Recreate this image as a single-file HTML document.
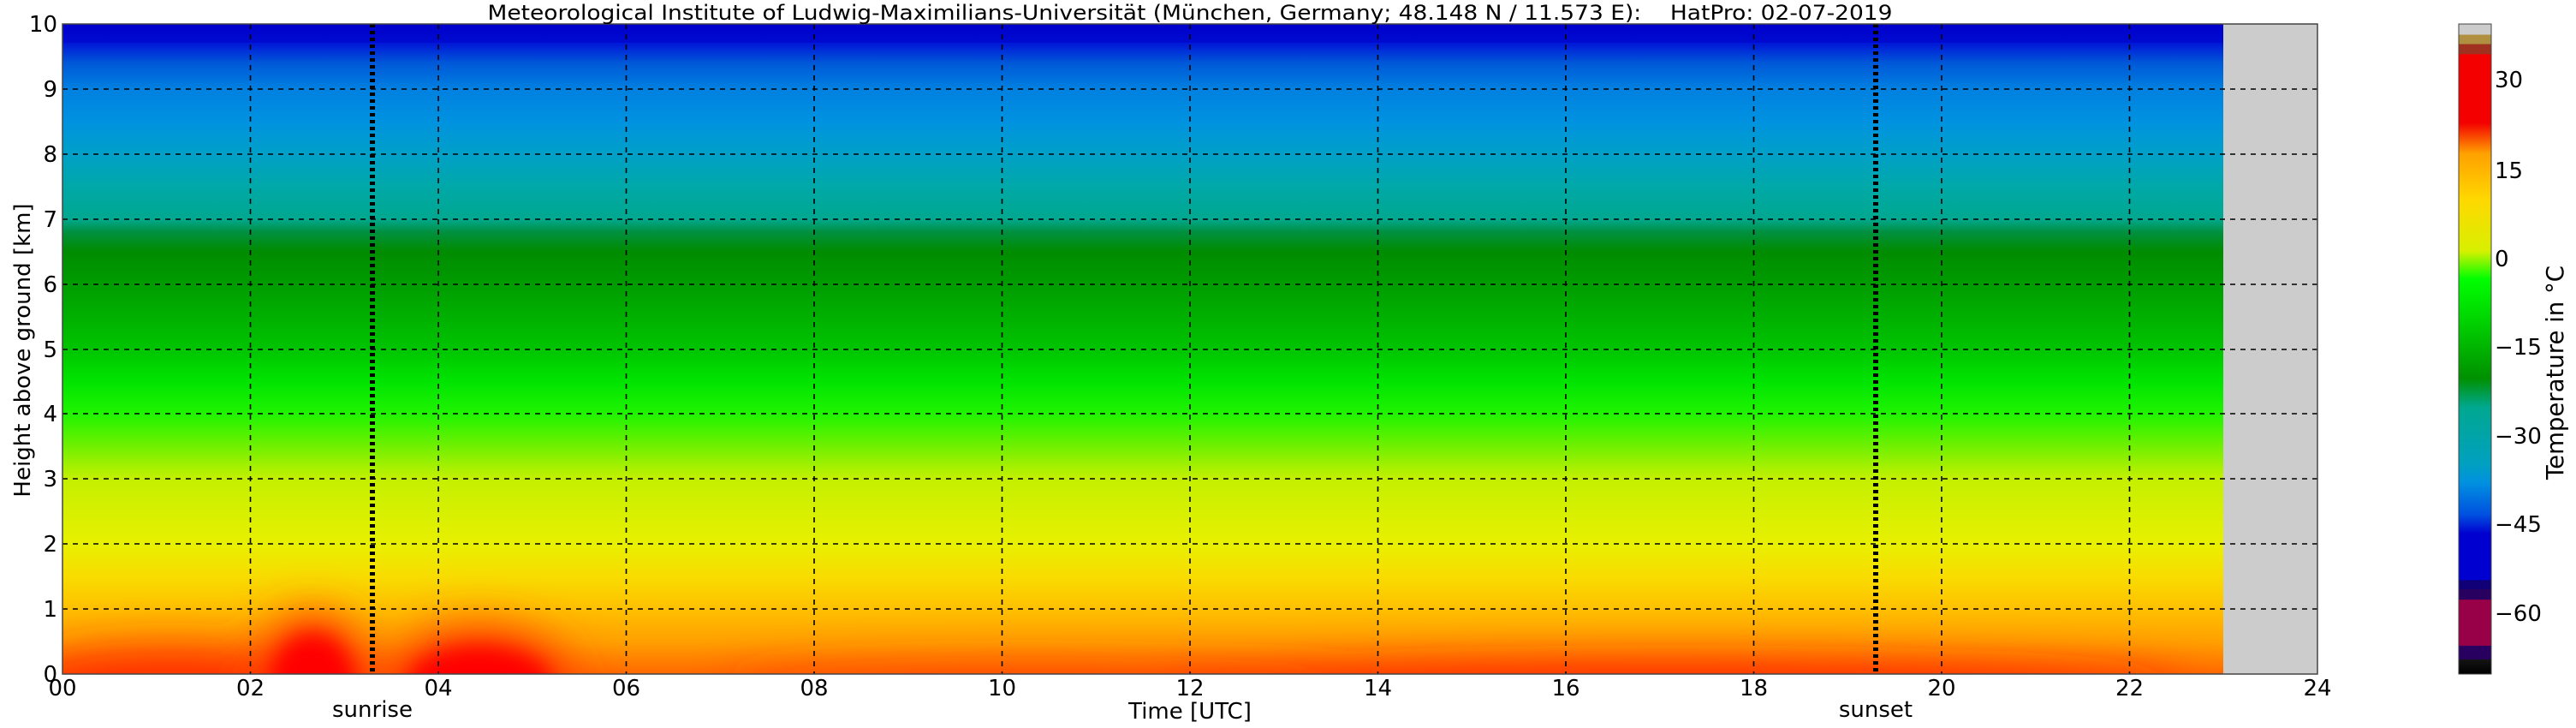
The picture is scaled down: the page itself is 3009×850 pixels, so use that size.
<!DOCTYPE html>
<html><head><meta charset="utf-8"><style>
html,body{margin:0;padding:0;background:#fff;width:3009px;height:850px;overflow:hidden}
svg{display:block;position:absolute;left:0;top:0}
text{font-family:"DejaVu Sans","Liberation Sans",sans-serif;fill:#000}
</style></head><body>
<svg width="3009" height="850" viewBox="0 0 3009 850" xmlns="http://www.w3.org/2000/svg">
<defs>
<linearGradient id="v" x1="0" y1="0" x2="0" y2="1">
<stop offset="0" stop-color="#0000d0"/>
<stop offset="0.03" stop-color="#0018d8"/>
<stop offset="0.06" stop-color="#0058d8"/>
<stop offset="0.10" stop-color="#0080e0"/>
<stop offset="0.15" stop-color="#0092e0"/>
<stop offset="0.20" stop-color="#00a0c8"/>
<stop offset="0.25" stop-color="#00a8a8"/>
<stop offset="0.30" stop-color="#00a890"/>
<stop offset="0.32" stop-color="#009040"/>
<stop offset="0.35" stop-color="#008c00"/>
<stop offset="0.40" stop-color="#009c00"/>
<stop offset="0.50" stop-color="#00c400"/>
<stop offset="0.55" stop-color="#00e400"/>
<stop offset="0.60" stop-color="#20f400"/>
<stop offset="0.65" stop-color="#70f000"/>
<stop offset="0.70" stop-color="#c4f000"/>
<stop offset="0.80" stop-color="#e8f000"/>
<stop offset="0.85" stop-color="#f8dc00"/>
<stop offset="0.90" stop-color="#ffc000"/>
<stop offset="0.95" stop-color="#ffa000"/>
<stop offset="1" stop-color="#ff6800"/>
</linearGradient>
<filter id="b1" x="-50%" y="-50%" width="200%" height="200%"><feGaussianBlur stdDeviation="25"/></filter>
<filter id="b2" x="-50%" y="-50%" width="200%" height="200%"><feGaussianBlur stdDeviation="12"/></filter>
<linearGradient id="cb" x1="0" y1="0" x2="0" y2="1">
<stop offset="0" stop-color="#cccccc"/>
<stop offset="0.0164" stop-color="#cccccc"/>
<stop offset="0.0165" stop-color="#b09040"/>
<stop offset="0.0308" stop-color="#b09040"/>
<stop offset="0.0309" stop-color="#a03020"/>
<stop offset="0.0464" stop-color="#a03020"/>
<stop offset="0.0465" stop-color="#f40000"/>
<stop offset="0.152" stop-color="#f40000"/>
<stop offset="0.199" stop-color="#ffa000"/>
<stop offset="0.270" stop-color="#ffd800"/>
<stop offset="0.349" stop-color="#d8f000"/>
<stop offset="0.392" stop-color="#00ff00"/>
<stop offset="0.45" stop-color="#00d800"/>
<stop offset="0.545" stop-color="#009000"/>
<stop offset="0.59" stop-color="#00a890"/>
<stop offset="0.677" stop-color="#00a0c0"/>
<stop offset="0.706" stop-color="#0090e0"/>
<stop offset="0.755" stop-color="#0050e0"/>
<stop offset="0.784" stop-color="#0000d0"/>
<stop offset="0.855" stop-color="#0000d0"/>
<stop offset="0.856" stop-color="#100078"/>
<stop offset="0.869" stop-color="#100078"/>
<stop offset="0.870" stop-color="#280060"/>
<stop offset="0.885" stop-color="#280060"/>
<stop offset="0.886" stop-color="#980048"/>
<stop offset="0.956" stop-color="#980048"/>
<stop offset="0.957" stop-color="#280060"/>
<stop offset="0.977" stop-color="#280060"/>
<stop offset="0.978" stop-color="#141414"/>
<stop offset="1" stop-color="#000"/>
</linearGradient>
<clipPath id="pc"><rect x="73" y="28" width="2524" height="759"/></clipPath>
</defs>

<rect x="73" y="28" width="2524" height="759" fill="url(#v)"/>
<g clip-path="url(#pc)">
<rect x="73" y="20" width="2524" height="30" fill="#0000c8" opacity="0.5"/>
<g filter="url(#b1)">
<ellipse cx="200" cy="800" rx="180" ry="45" fill="#ff2800" opacity="0.8"/>
<ellipse cx="1950" cy="800" rx="600" ry="30" fill="#ff2000" opacity="0.7"/>
<ellipse cx="1200" cy="800" rx="350" ry="25" fill="#ff3000" opacity="0.5"/>
<ellipse cx="365" cy="800" rx="70" ry="85" fill="#ff4000"/>
<ellipse cx="560" cy="800" rx="110" ry="70" fill="#ff4000"/>
</g>
<g filter="url(#b2)">
<ellipse cx="365" cy="800" rx="50" ry="60" fill="#ff0000"/>
<ellipse cx="560" cy="800" rx="85" ry="45" fill="#ff0000"/>
</g>
</g>
<rect x="2597" y="28" width="110" height="759" fill="#cccccc"/>

<g stroke="#000" stroke-width="1.6" stroke-dasharray="6,6" fill="none">
<path d="M73 711H2707M73 635H2707M73 559H2707M73 483H2707M73 408H2707M73 332H2707M73 256H2707M73 180H2707M73 104H2707"/>
<path d="M292.5 28V787M512 28V787M731.5 28V787M951 28V787M1170.5 28V787M1390 28V787M1609.5 28V787M1829 28V787M2048.5 28V787M2268 28V787M2487.5 28V787"/>
</g>
<g stroke="#000" stroke-width="6" stroke-dasharray="4,4">
<path d="M435 28V787M2191 28V787"/>
</g>
<rect x="73" y="28" width="2634" height="759" fill="none" stroke="#444" stroke-width="1.5"/>

<text x="1390" y="23" font-size="24" text-anchor="middle" textLength="1641" lengthAdjust="spacingAndGlyphs">Meteorological Institute of Ludwig-Maximilians-Universität (München, Germany; 48.148 N / 11.573 E):&#160;&#160;&#160;&#160;HatPro: 02-07-2019</text>

<g font-size="26" text-anchor="end">
<text x="67" y="796">0</text><text x="67" y="720">1</text><text x="67" y="644">2</text><text x="67" y="568">3</text><text x="67" y="492">4</text><text x="67" y="417">5</text><text x="67" y="341">6</text><text x="67" y="265">7</text><text x="67" y="189">8</text><text x="67" y="113">9</text><text x="67" y="37">10</text>
</g>
<text transform="translate(35,409) rotate(-90)" font-size="26" text-anchor="middle">Height above ground [km]</text>

<g font-size="26" text-anchor="middle">
<text x="73" y="812">00</text><text x="292.5" y="812">02</text><text x="512" y="812">04</text><text x="731.5" y="812">06</text><text x="951" y="812">08</text><text x="1170.5" y="812">10</text><text x="1390" y="812">12</text><text x="1609.5" y="812">14</text><text x="1829" y="812">16</text><text x="2048.5" y="812">18</text><text x="2268" y="812">20</text><text x="2487.5" y="812">22</text><text x="2707" y="812">24</text>
<text x="1390" y="839">Time [UTC]</text>
<text x="435" y="837">sunrise</text>
<text x="2191" y="837">sunset</text>
</g>

<rect x="2872" y="28" width="38" height="759" fill="url(#cb)" stroke="#444" stroke-width="1"/>
<g font-size="26">
<text x="2914" y="102">30</text><text x="2914" y="208">15</text><text x="2914" y="311">0</text><text x="2914" y="414">−15</text><text x="2914" y="518">−30</text><text x="2914" y="621">−45</text><text x="2914" y="725">−60</text>
</g>
<text transform="translate(2994,435) rotate(-90)" font-size="28" text-anchor="middle" font-family="'DejaVu Sans Condensed','Liberation Sans Narrow',sans-serif" textLength="250" lengthAdjust="spacingAndGlyphs">Temperature in °C</text>
</svg>
</body></html>
